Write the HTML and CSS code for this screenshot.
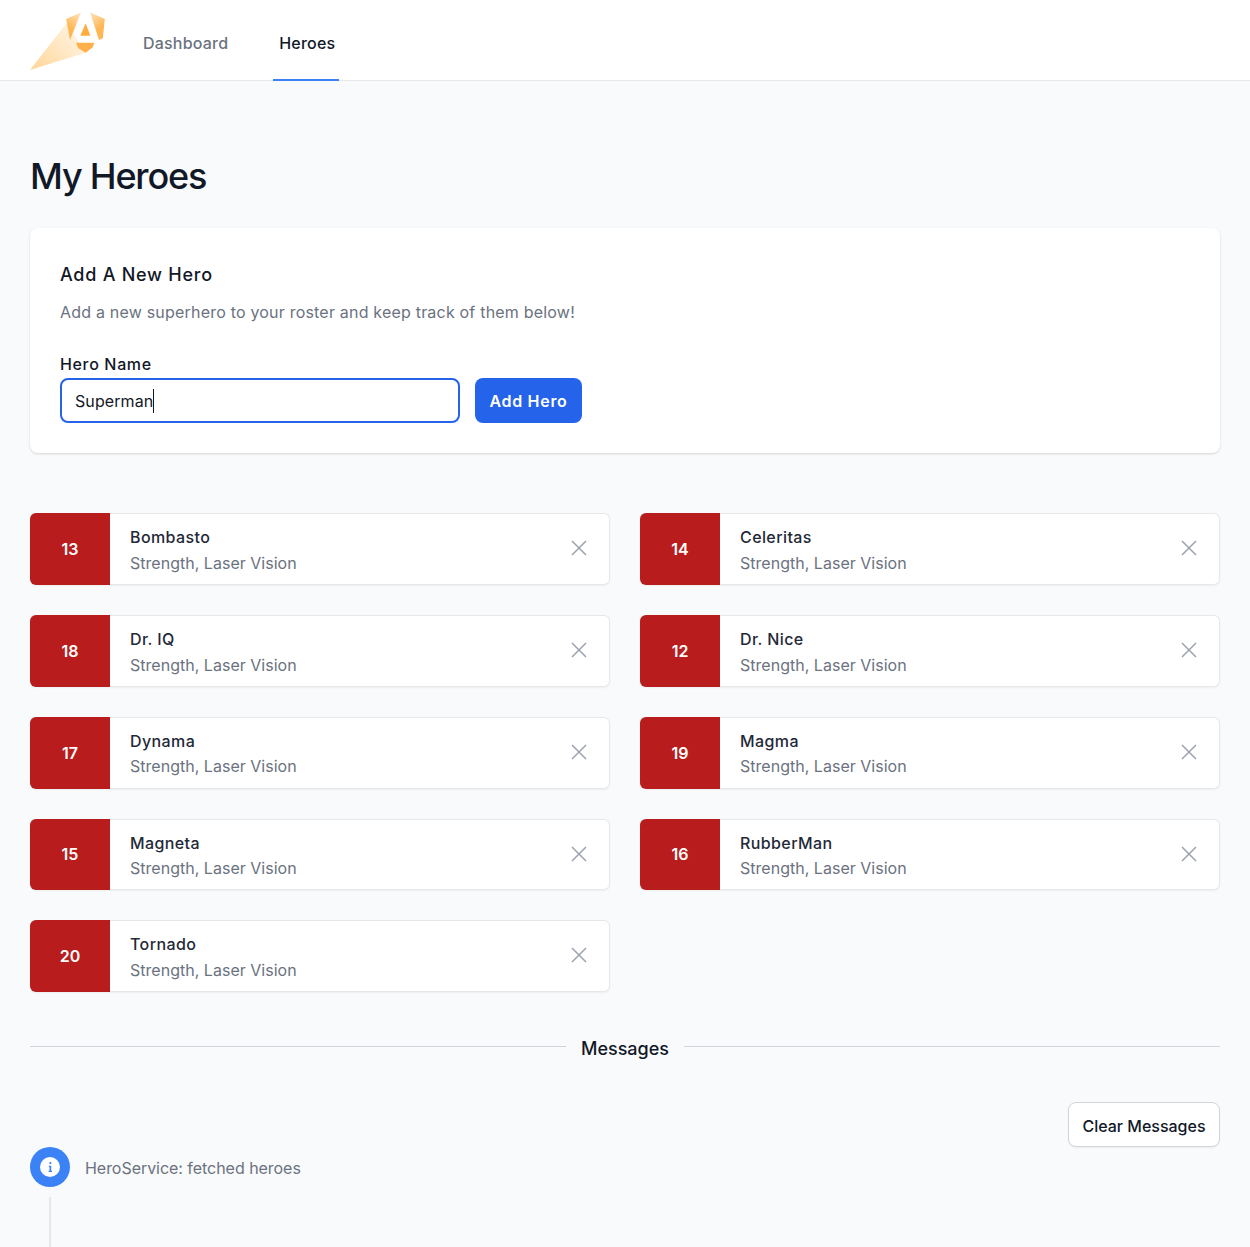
FILE: index.html
```html
<!DOCTYPE html>
<html lang="en">

<head>
    <meta charset="UTF-8">
    <meta name="viewport" content="width=device-width, initial-scale=1.0">
    <title>My Heroes</title>
    <link rel="stylesheet" href="styles.css">
</head>

<body>
    <header class="topbar">
        <svg class="logo" width="76" height="60" viewBox="0 0 76 60">
            <defs>
                <linearGradient id="beam" x1="0" y1="58" x2="52" y2="14" gradientUnits="userSpaceOnUse">
                    <stop offset="0" stop-color="#ffd596"/>
                    <stop offset="1" stop-color="#fff6e8"/>
                </linearGradient>
                <linearGradient id="facet-left" x1="52" y1="0" x2="40" y2="16" gradientUnits="userSpaceOnUse">
                    <stop offset="0" stop-color="#ffe9c9"/>
                    <stop offset="1" stop-color="#ffb654"/>
                </linearGradient>
                <linearGradient id="facet-right" x1="58" y1="0" x2="70" y2="16" gradientUnits="userSpaceOnUse">
                    <stop offset="0" stop-color="#ffe9c9"/>
                    <stop offset="1" stop-color="#ffb654"/>
                </linearGradient>
            </defs>
            <polygon points="0,58 36.7,11 55.7,40.7" fill="url(#beam)"/>
            <polygon points="36.2,7 51,0.5 40,28" fill="url(#facet-left)"/>
            <polygon points="60,0.3 74.8,7 72.8,26.3 69,28" fill="url(#facet-right)"/>
            <polygon points="55.7,11.3 60.3,23.7 50.3,23.7" fill="#ffab3d"/>
            <polygon points="46,30.7 64.3,30.7 62.7,35.3 55.7,40.7 48.3,36.3" fill="#ffb04a"/>
        </svg>
        <nav class="nav">
            <a class="nav-link" href="#">Dashboard</a>
            <a class="nav-link active" href="#">Heroes</a>
        </nav>
    </header>

    <main class="page">
        <h1>My Heroes</h1>

        <section class="card">
            <h2>Add A New Hero</h2>
            <p class="card-sub">Add a new superhero to your roster and keep track of them below!</p>
            <label class="field-label" for="hero">Hero Name</label>
            <div class="form-row">
                <div class="input-box" id="hero">Superman<span class="caret"></span></div>
                <button class="btn-primary" type="button">Add Hero</button>
            </div>
        </section>

        <ul class="hero-grid">
            <li class="hero">
                <div class="hero-id">13</div>
                <div class="hero-info"><div class="hero-name">Bombasto</div><div class="hero-powers">Strength, Laser Vision</div></div>
                <svg class="hero-x" width="24" height="24" viewBox="0 0 24 24"><path d="M5 5l14 14M19 5L5 19"/></svg>
            </li>
            <li class="hero">
                <div class="hero-id">14</div>
                <div class="hero-info"><div class="hero-name">Celeritas</div><div class="hero-powers">Strength, Laser Vision</div></div>
                <svg class="hero-x" width="24" height="24" viewBox="0 0 24 24"><path d="M5 5l14 14M19 5L5 19"/></svg>
            </li>
            <li class="hero">
                <div class="hero-id">18</div>
                <div class="hero-info"><div class="hero-name">Dr. IQ</div><div class="hero-powers">Strength, Laser Vision</div></div>
                <svg class="hero-x" width="24" height="24" viewBox="0 0 24 24"><path d="M5 5l14 14M19 5L5 19"/></svg>
            </li>
            <li class="hero">
                <div class="hero-id">12</div>
                <div class="hero-info"><div class="hero-name">Dr. Nice</div><div class="hero-powers">Strength, Laser Vision</div></div>
                <svg class="hero-x" width="24" height="24" viewBox="0 0 24 24"><path d="M5 5l14 14M19 5L5 19"/></svg>
            </li>
            <li class="hero">
                <div class="hero-id">17</div>
                <div class="hero-info"><div class="hero-name">Dynama</div><div class="hero-powers">Strength, Laser Vision</div></div>
                <svg class="hero-x" width="24" height="24" viewBox="0 0 24 24"><path d="M5 5l14 14M19 5L5 19"/></svg>
            </li>
            <li class="hero">
                <div class="hero-id">19</div>
                <div class="hero-info"><div class="hero-name">Magma</div><div class="hero-powers">Strength, Laser Vision</div></div>
                <svg class="hero-x" width="24" height="24" viewBox="0 0 24 24"><path d="M5 5l14 14M19 5L5 19"/></svg>
            </li>
            <li class="hero">
                <div class="hero-id">15</div>
                <div class="hero-info"><div class="hero-name">Magneta</div><div class="hero-powers">Strength, Laser Vision</div></div>
                <svg class="hero-x" width="24" height="24" viewBox="0 0 24 24"><path d="M5 5l14 14M19 5L5 19"/></svg>
            </li>
            <li class="hero">
                <div class="hero-id">16</div>
                <div class="hero-info"><div class="hero-name">RubberMan</div><div class="hero-powers">Strength, Laser Vision</div></div>
                <svg class="hero-x" width="24" height="24" viewBox="0 0 24 24"><path d="M5 5l14 14M19 5L5 19"/></svg>
            </li>
            <li class="hero">
                <div class="hero-id">20</div>
                <div class="hero-info"><div class="hero-name">Tornado</div><div class="hero-powers">Strength, Laser Vision</div></div>
                <svg class="hero-x" width="24" height="24" viewBox="0 0 24 24"><path d="M5 5l14 14M19 5L5 19"/></svg>
            </li>
        </ul>

        <div class="divider"><span class="divider-label">Messages</span></div>

        <div class="clear-row">
            <button class="btn-white" type="button">Clear Messages</button>
        </div>

        <div class="timeline">
            <div class="timeline-rail">
                <div class="timeline-dot">
                    <svg width="20" height="20" viewBox="0 0 20 20"><circle cx="10" cy="10" r="10" fill="#fff"/><path d="M10.4 5a1.1 1.1 0 110 2.2 1.1 1.1 0 010-2.2zM8.8 8.8h2.4v5h.8v1.2H8.6v-1.2h.9V10h-.7z" fill="#3b82f6"/></svg>
                </div>
                <div class="timeline-line"></div>
            </div>
            <div class="timeline-text">HeroService: fetched heroes</div>
        </div>
    </main>
</body>

</html>
```

FILE: styles.css
```css
* {
    box-sizing: border-box;
}

html,
body {
    height: 100%;
}

body {
    margin: 0;
    font-family: Inter, "Noto Sans", Arial, sans-serif;
    font-size: 16px;
    line-height: 24px;
    color: #111827;
    background-color: #f9fafb;
    overflow: hidden;
}

.topbar {
    display: flex;
    height: 81px;
    padding-left: 30px;
    background-color: #fff;
    border-bottom: 1px solid #e5e7eb;
}

.logo {
    margin-top: 12px;
    filter: blur(0.4px);
}

.nav {
    display: flex;
    gap: 41px;
    margin-left: 31px;
}

.nav-link {
    display: flex;
    align-items: center;
    height: 81px;
    padding: 6px 4px 0 6px;
    border-bottom: 2px solid transparent;
    color: #6b7280;
    font-weight: 500;
    letter-spacing: 0.2px;
    text-decoration: none;
}

.nav-link.active {
    color: #111827;
    border-bottom-color: #3b82f6;
}

.page {
    padding: 0 30px;
}

h1 {
    margin: 75px 0 32px;
    font-size: 36px;
    line-height: 40px;
    font-weight: 500;
    letter-spacing: -1.2px;
}

.card {
    height: 225px;
    padding: 31px 30px 30px;
    background-color: #fff;
    border-radius: 8px;
    box-shadow: 0 1px 3px rgba(0, 0, 0, 0.1), 0 1px 2px rgba(0, 0, 0, 0.06);
}

h2 {
    margin: 0;
    font-size: 18px;
    line-height: 32px;
    font-weight: 500;
    letter-spacing: 0.75px;
}

.card-sub {
    margin: 9px 0 0;
    color: #6b7280;
    line-height: 24px;
    letter-spacing: 0.2px;
}

.field-label {
    display: block;
    margin-top: 28px;
    font-weight: 500;
    letter-spacing: 0.65px;
}

.form-row {
    display: flex;
    gap: 15px;
    margin-top: 2px;
}

.input-box {
    display: flex;
    align-items: center;
    width: 400px;
    height: 45px;
    padding: 0 13px;
    background-color: #fff;
    border: 2px solid #2563eb;
    border-radius: 8px;
    letter-spacing: 0.1px;
}

.caret {
    width: 1px;
    height: 24px;
    background-color: #111827;
}

.btn-primary {
    width: 107px;
    height: 45px;
    padding: 0;
    border: none;
    border-radius: 8px;
    background-color: #2563eb;
    color: #fff;
    font: inherit;
    font-weight: 600;
    letter-spacing: 0.7px;
}

.hero-grid {
    display: grid;
    grid-template-columns: 1fr 1fr;
    gap: 30px;
    margin: 60.25px 0 0;
    padding: 0;
    list-style: none;
}

.hero {
    display: flex;
    align-items: center;
    height: 71.75px;
    background-color: #fff;
    border-radius: 6px;
    box-shadow: inset 0 0 0 1px #e5e7eb, 0 1px 2px rgba(0, 0, 0, 0.05);
    overflow: hidden;
}

.hero-id {
    display: flex;
    align-items: center;
    justify-content: center;
    flex-shrink: 0;
    width: 80px;
    height: 100%;
    background-color: #b91c1c;
    color: #fff;
    font-weight: 600;
}

.hero-info {
    flex: 1;
    padding-left: 20px;
    padding-top: 2px;
}

.hero-name {
    font-weight: 500;
    color: #1f2937;
    letter-spacing: 0.4px;
}

.hero-powers {
    margin-top: 1.5px;
    color: #6b7280;
    letter-spacing: 0.02px;
}

.hero-x {
    margin-right: 19px;
    margin-top: -1.5px;
    fill: none;
    stroke: #9ca3af;
    stroke-width: 1.5;
}

.divider {
    display: flex;
    align-items: center;
    gap: 15px;
    margin-top: 42.75px;
    font-size: 18px;
    line-height: 24px;
    font-weight: 500;
}

.divider-label {
    padding-top: 2px;
}

.divider::before,
.divider::after {
    content: "";
    flex: 1;
    height: 1px;
    margin-bottom: 2px;
    background-color: #d1d5db;
}

.clear-row {
    display: flex;
    justify-content: flex-end;
    margin-top: 41px;
}

.btn-white {
    width: 152px;
    height: 45px;
    padding: 3px 0 0;
    background-color: #fff;
    border: 1px solid #d1d5db;
    border-radius: 8px;
    box-shadow: 0 1px 2px rgba(0, 0, 0, 0.05);
    color: #111827;
    font: inherit;
    font-weight: 500;
}

.timeline {
    display: flex;
    gap: 15px;
}

.timeline-rail {
    display: flex;
    flex-direction: column;
    align-items: center;
    width: 40px;
}

.timeline-dot {
    display: flex;
    align-items: center;
    justify-content: center;
    width: 40px;
    height: 40px;
    border-radius: 50%;
    background-color: #3b82f6;
}

.timeline-line {
    width: 2px;
    height: 60px;
    margin-top: 10px;
    background-color: #e5e7eb;
}

.timeline-text {
    margin-top: 9px;
    color: #6b7280;
    letter-spacing: -0.04px;
}
```
